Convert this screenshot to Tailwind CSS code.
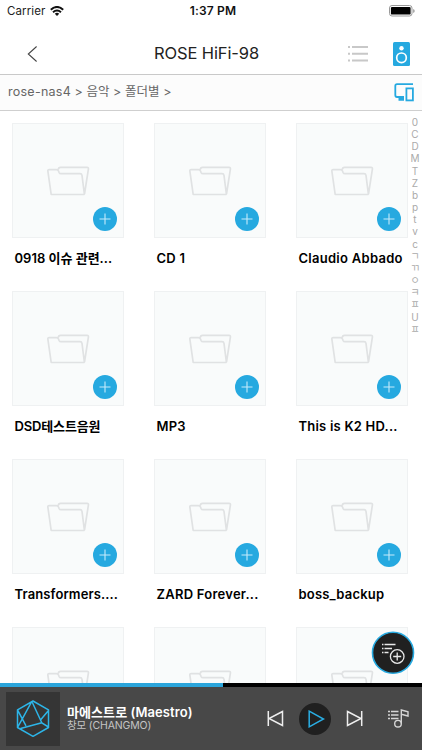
<!DOCTYPE html>
<html lang="ko">
<head>
<meta charset="utf-8">
<meta name="viewport" content="width=device-width, initial-scale=1">
<title>ROSE HiFi-98</title>
<script src="https://cdn.jsdelivr.net/npm/@tailwindcss/browser@4"></script>
</head>
<body class="bg-white">
<svg class="hidden">
  <symbol id="folder" viewBox="0 0 44 30"><path d="M5.200 28.500 1.900 5.400Q1.600 3.600 3.200 3.600H10.500Q11.800 3.600 12.400 4.800L13 6.300Q13.600 7.700 15 7.700H34Q35.700 7.700 36 9.400L38.300 27.500Q38.400 28.500 37.500 28.500ZM12.200 3.700Q12.400 1.300 14.500 1.300H41Q42.700 1.300 42.400 3.100L38.500 28" fill="none" stroke="#e0e2e3" stroke-width="1.700" stroke-linejoin="round"/></symbol>
  <symbol id="add" viewBox="0 0 24 24"><circle cx="12" cy="12" r="12" fill="#26a9e0"/><path d="M12 6.500V17.500M6.500 12H17.500" stroke="#c5ebfb" stroke-width="1.100"/></symbol>
</svg>
<div class="relative flex h-[750px] w-[422px] flex-col overflow-hidden bg-white font-['Inter','Noto_Sans_CJK_KR',sans-serif] text-black">
  <header class="shrink-0">
    <div class="grid h-[22px] grid-cols-3 items-center px-[7px] text-[12px] leading-[22px]">
      <div class="flex items-center gap-[5px]"><span class="text-[11.500px] tracking-[0.100px] text-[#222]">Carrier</span>
        <svg class="h-[10px] w-[14px]" viewBox="0 0 14 10" fill="none" stroke="#111" stroke-width="2"><path d="M.8 3.700Q7-1.800 13.200 3.700M3 6.200Q7 2.700 11 6.200"/><path d="M4.800 7.700Q7 5.900 9.200 7.700L7 10Z" fill="#111" stroke="none"/></svg>
      </div>
      <div class="pl-[4px] text-center font-semibold tracking-[0.150px] whitespace-nowrap text-[#111]">1:37 PM</div>
      <div class="flex justify-end"><svg class="h-[12px] w-[26px]" viewBox="0 0 26 12"><rect x=".5" y=".5" width="22.500" height="10.500" rx="2.500" fill="none" stroke="#999"/><rect x="1.900" y="1.900" width="19.700" height="7.700" rx="1.200" fill="#000"/><path d="M24.200 4v4q1.500-.7 1.500-2t-1.500-2" fill="#999"/></svg></div>
    </div>
    <div class="flex h-[53px] items-center border-b-[1.500px] border-[#c9c9c9] pr-[12px] pl-[27px]">
      <svg class="mt-[11px] h-[16px] w-[11px]" viewBox="0 0 11 16" fill="none" stroke="#444" stroke-width="1.100"><path d="M9.600.5 1.300 8 9.600 15.500"/></svg>
      <h1 class="mt-[11px] ml-[116px] w-[194px] text-[16.500px] tracking-[-0.120px] text-[#222]">ROSE HiFi-98</h1>
      <svg class="mt-[11px] h-[17px] w-[20px]" viewBox="0 0 20 17" stroke="#c8c8c8" stroke-width="2"><path d="M0 2H2M4 2H20M0 8.700H2M4 8.700H20M0 15.400H2M4 15.400H20"/></svg>
      <svg class="mt-[11px] ml-auto h-[24px] w-[17px]" viewBox="0 0 17 24"><rect width="17" height="24" rx="1.500" fill="#26a9e0"/><circle cx="8.500" cy="6.300" r="2.200" fill="#fff"/><circle cx="8.500" cy="15.800" r="4.800" fill="none" stroke="#fff" stroke-width="1.700"/></svg>
    </div>
    <nav class="flex h-[36px] items-center justify-between border-b-[1.500px] border-[#cfcfcf] bg-[#fcfcfc] pr-[8px] pl-[8px] text-[12.500px] text-[#666]">
      <span class="tracking-[0.050px] whitespace-nowrap"><span class="tracking-[0.250px]">rose-nas4</span> &gt; 음악 &gt; 폴더별 &gt;</span>
      <svg class="h-[19px] w-[20px]" viewBox="0 0 20 19" fill="none" stroke="#26a9e0" stroke-width="1.800"><path d="M19 1.200H3Q1.300 1.200 1.300 3V12Q1.300 14 3 14H10"/><path d="M4.500 16H10" stroke-width="3.500"/><rect x="12.400" y="5.400" width="6.500" height="12"/></svg>
    </nav>
  </header>

  <main class="flex min-h-0 flex-1 overflow-hidden pt-[12px] pl-[12px]">
    <div class="grid auto-rows-[168px] grid-cols-[112px_112px_112px] content-start gap-x-[30px]">
      <article><div class="relative flex h-[115px] items-center justify-center border border-[#eff1f2] bg-[#f9fbfb]"><svg class="h-[30px] w-[44px]"><use href="#folder"/></svg><svg class="absolute right-[6px] bottom-[6px] size-[24px]"><use href="#add"/></svg></div><h2 class="ml-[2.500px] pt-[10px] text-[13px] leading-[20px] font-semibold whitespace-nowrap">0918 이슈 관련...</h2></article>
      <article><div class="relative flex h-[115px] items-center justify-center border border-[#eff1f2] bg-[#f9fbfb]"><svg class="h-[30px] w-[44px]"><use href="#folder"/></svg><svg class="absolute right-[6px] bottom-[6px] size-[24px]"><use href="#add"/></svg></div><h2 class="ml-[2.500px] pt-[10px] text-[13px] leading-[20px] font-semibold tracking-[0.270px] whitespace-nowrap">CD 1</h2></article>
      <article><div class="relative flex h-[115px] items-center justify-center border border-[#eff1f2] bg-[#f9fbfb]"><svg class="h-[30px] w-[44px]"><use href="#folder"/></svg><svg class="absolute right-[6px] bottom-[6px] size-[24px]"><use href="#add"/></svg></div><h2 class="ml-[2.500px] pt-[10px] text-[13px] leading-[20px] font-semibold tracking-[0.270px] whitespace-nowrap">Claudio Abbado</h2></article>
      <article><div class="relative flex h-[115px] items-center justify-center border border-[#eff1f2] bg-[#f9fbfb]"><svg class="h-[30px] w-[44px]"><use href="#folder"/></svg><svg class="absolute right-[6px] bottom-[6px] size-[24px]"><use href="#add"/></svg></div><h2 class="ml-[2.500px] pt-[10px] text-[13px] leading-[20px] font-semibold tracking-[-0.150px] whitespace-nowrap">DSD테스트음원</h2></article>
      <article><div class="relative flex h-[115px] items-center justify-center border border-[#eff1f2] bg-[#f9fbfb]"><svg class="h-[30px] w-[44px]"><use href="#folder"/></svg><svg class="absolute right-[6px] bottom-[6px] size-[24px]"><use href="#add"/></svg></div><h2 class="ml-[2.500px] pt-[10px] text-[13px] leading-[20px] font-semibold tracking-[0.200px] whitespace-nowrap">MP3</h2></article>
      <article><div class="relative flex h-[115px] items-center justify-center border border-[#eff1f2] bg-[#f9fbfb]"><svg class="h-[30px] w-[44px]"><use href="#folder"/></svg><svg class="absolute right-[6px] bottom-[6px] size-[24px]"><use href="#add"/></svg></div><h2 class="ml-[2.500px] pt-[10px] text-[13px] leading-[20px] font-semibold tracking-[0.220px] whitespace-nowrap">This is K2 HD...</h2></article>
      <article><div class="relative flex h-[115px] items-center justify-center border border-[#eff1f2] bg-[#f9fbfb]"><svg class="h-[30px] w-[44px]"><use href="#folder"/></svg><svg class="absolute right-[6px] bottom-[6px] size-[24px]"><use href="#add"/></svg></div><h2 class="ml-[2.500px] pt-[10px] text-[13px] leading-[20px] font-semibold tracking-[0.120px] whitespace-nowrap">Transformers....</h2></article>
      <article><div class="relative flex h-[115px] items-center justify-center border border-[#eff1f2] bg-[#f9fbfb]"><svg class="h-[30px] w-[44px]"><use href="#folder"/></svg><svg class="absolute right-[6px] bottom-[6px] size-[24px]"><use href="#add"/></svg></div><h2 class="ml-[2.500px] pt-[10px] text-[13px] leading-[20px] font-semibold tracking-[0.250px] whitespace-nowrap">ZARD Forever...</h2></article>
      <article><div class="relative flex h-[115px] items-center justify-center border border-[#eff1f2] bg-[#f9fbfb]"><svg class="h-[30px] w-[44px]"><use href="#folder"/></svg><svg class="absolute right-[6px] bottom-[6px] size-[24px]"><use href="#add"/></svg></div><h2 class="ml-[2.500px] pt-[10px] text-[13px] leading-[20px] font-semibold tracking-[0.200px] whitespace-nowrap">boss_backup</h2></article>
      <article><div class="flex h-[115px] items-center justify-center border border-[#eff1f2] bg-[#f9fbfb]"><svg class="h-[30px] w-[44px]"><use href="#folder"/></svg></div></article>
      <article><div class="flex h-[115px] items-center justify-center border border-[#eff1f2] bg-[#f9fbfb]"><svg class="h-[30px] w-[44px]"><use href="#folder"/></svg></div></article>
      <article><div class="flex h-[115px] items-center justify-center border border-[#eff1f2] bg-[#f9fbfb]"><svg class="h-[30px] w-[44px]"><use href="#folder"/></svg></div></article>
    </div>
    <div class="-mt-[7px] flex w-[14px] flex-col items-center text-[10px] leading-[12.150px] text-[#aaa]">
      <span>0</span><span>C</span><span>D</span><span>M</span><span>T</span><span>Z</span><span>b</span><span>p</span><span>t</span><span>v</span><span>c</span><span>ㄱ</span><span>ㄲ</span><span>ㅇ</span><span>ㅋ</span><span>ㅍ</span><span>U</span><span>ㅍ</span>
    </div>
  </main>

  <button class="absolute top-[630px] left-[371px] size-[44px]" aria-label="추가">
    <svg class="size-[44px]" viewBox="0 0 44 44" fill="none"><circle cx="22" cy="22.700" r="20.500" fill="#202020" stroke="#26a9e0" stroke-width="1.600"/><g stroke="#e8e8e8" stroke-width="1.300"><path d="M11 14.500h1.500M13.500 14.500H24.500M11 18.500h1.500M13.500 18.500H21M11 22.500h1.500M13.500 22.500H17.500"/><circle cx="26.200" cy="26.500" r="6.800"/><path d="M26.200 22.500V30.500M22.200 26.500H30.200"/></g></svg>
  </button>

  <footer class="flex h-[67px] shrink-0 flex-col bg-[#484848]">
    <div class="h-[4px] bg-black"><div class="h-full bg-[#2ba5db]" style="width:52.900%"></div></div>
    <div class="flex flex-1 items-center pr-[13px] pl-[6px]">
      <div class="flex size-[54px] items-center justify-center bg-[#353535]">
        <svg class="h-[38px] w-[34px]" viewBox="0 0 34 38" fill="none" stroke="#2db5e8" stroke-width="1.500" stroke-linejoin="round"><path d="M17 1 32.500 9.800V27.500L17 36.300 1.500 27.500V9.800ZM15.500 2 6.300 18.800M1.500 9.800 10 25.800M1.500 27.500 6.300 18.800M16 1.800 25.800 22.800M32.500 10.500 24.500 20M4.500 28.500 25.800 22.800 32.500 27"/></svg>
      </div>
      <div class="ml-[7px] w-[200px] whitespace-nowrap">
        <div class="text-[13px] leading-[15px] font-semibold tracking-[0.080px] text-white">마에스트로 (Maestro)</div>
        <div class="text-[10.500px] leading-[12px] tracking-[-0.150px] text-[#c4c4c4]">창모 (CHANGMO)</div>
      </div>
      <svg class="h-[17px] w-[17px]" viewBox="0 0 17 17" fill="none" stroke="#eee" stroke-width="1.500"><path d="M1.300 1V16M15.500 1.500 2 8.500 15.500 15.500Z"/></svg>
      <div class="ml-[15px] flex size-[32px] items-center justify-center rounded-full bg-[#202020]"><svg class="ml-[3px] h-[18px] w-[17px]" viewBox="0 0 17 18" fill="none" stroke="#2aaee4" stroke-width="1.500"><path d="M1.200 1.200 15.500 9 1.200 16.800Z"/></svg></div>
      <svg class="ml-[15px] h-[17px] w-[17px]" viewBox="0 0 17 17" fill="none" stroke="#eee" stroke-width="1.500"><path d="M15.700 1V16M1.500 1.500 15 8.500 1.500 15.500Z"/></svg>
      <svg class="ml-auto h-[19px] w-[21px]" viewBox="0 0 21 19" fill="none" stroke="#d5d5d5" stroke-width="1.400"><path d="M0 2.500H2M3 2.500H10.500M0 6H2M3 6H10.500M0 9.500H2M3 9.500H10.500"/><circle cx="10" cy="14.700" r="3.300"/><path d="M13.300 14.500V1L20 2.800V7L13.300 5.200"/></svg>
    </div>
  </footer>
</div>
</body>
</html>
